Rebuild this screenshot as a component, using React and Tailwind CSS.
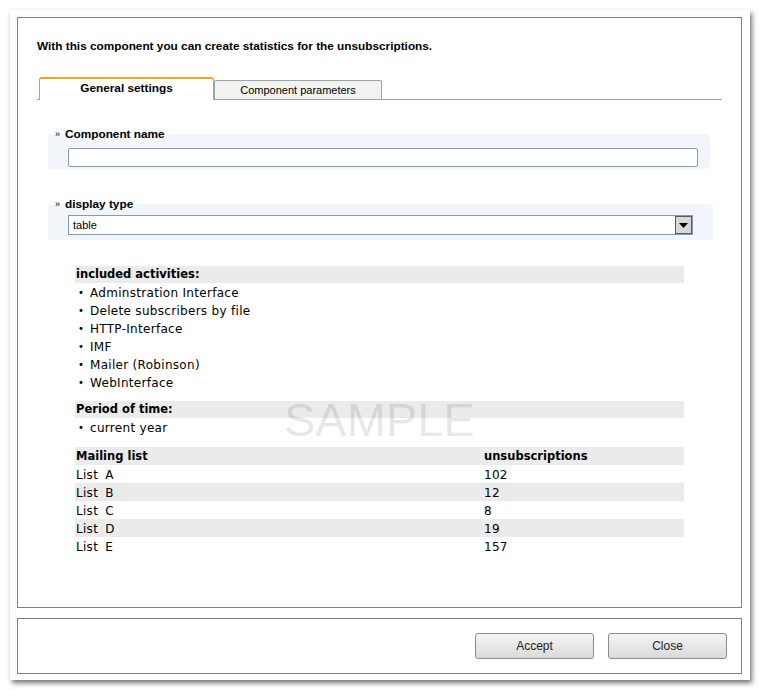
import React from 'react'

const activities = [
  'Adminstration Interface',
  'Delete subscribers by file',
  'HTTP-Interface',
  'IMF',
  'Mailer (Robinson)',
  'WebInterface',
]

const lists = [
  ['A', '102'],
  ['B', '12'],
  ['C', '8'],
  ['D', '19'],
  ['E', '157'],
]

function SectionLabel({ children }) {
  return (
    <div className="relative z-10 ml-[37px] h-[12px] flex items-center gap-[5px] text-[11.8px] leading-[12px] font-bold text-black">
      <span className="text-[9px] font-normal">»</span>
      <span>{children}</span>
    </div>
  )
}

function Bullet({ children }) {
  return (
    <div className="h-[18px] flex items-center pl-[3px] pt-px text-[12px] tracking-[0.3px]">
      <span className="w-[12px] text-[10px]">•</span>
      <span>{children}</span>
    </div>
  )
}

export default function App() {
  return (
    <div className="w-[760px] h-[691px] bg-white relative font-['Liberation_Sans',sans-serif]">
      <div className="absolute left-[10px] top-[10px] w-[740px] h-[670px] bg-white shadow-[2px_3px_5px_rgba(0,0,0,0.55)] pl-[7px] pr-[8px] pt-[7px] flex flex-col">
        {/* main settings panel */}
        <div className="relative h-[591px] border border-[#808080] flex flex-col">
          <div className="ml-[19px] mt-[21px] h-[14px] text-[11.8px] leading-[14px] font-bold text-black">
            With this component you can create statistics for the unsubscriptions.
          </div>

          {/* tabs */}
          <div className="ml-[19px] mt-[24px] w-[685px] h-[23px] flex items-end border-b border-[#91a7b4]">
            <div className="ml-[2px] -mb-px w-[175px] h-[23px] bg-white border-x border-[#91a7b4] border-t-2 border-t-[#eea71e] rounded-t-[3px] flex justify-center pt-[2px] text-[11.8px] leading-[14px] font-bold">
              General settings
            </div>
            <div className="w-[168px] h-[19px] bg-[#f2f2ee] border border-b-0 border-[#91a7b4] rounded-t-[2px] flex items-center justify-center text-[11px] leading-[14px]">
              Component parameters
            </div>
          </div>

          <div className="mt-[28px]">
            <SectionLabel>Component name</SectionLabel>
            <div className="ml-[30px] -mt-[6px] w-[662px] h-[35px] bg-[#f2f6fa] rounded-[4px] pl-[20px] pt-[11px]">
              <input className="w-[630px] h-[19px] bg-white border border-[#7f9db9] rounded-[2px] outline-none" />
            </div>
          </div>

          <div className="mt-[29px]">
            <SectionLabel>display type</SectionLabel>
            <div className="ml-[30px] -mt-[6px] w-[665px] h-[36px] bg-[#f2f6fa] rounded-[4px] pl-[20px] pt-[11px]">
              <div className="w-[625px] h-[20px] bg-white border border-[#7f9db9] flex items-center">
                <span className="flex-1 pl-[4px] text-[11px]">table</span>
                <div className="w-[17px] h-[18px] border border-[#5a5a5a] bg-[#d8d8d8] flex items-center justify-center">
                  <svg width="9" height="5" viewBox="0 0 9 5">
                    <path d="M0 0H9L4.5 5Z" fill="#000" />
                  </svg>
                </div>
              </div>
            </div>
          </div>

          {/* statistics preview */}
          <div className="ml-[57px] mt-[26px] w-[609px] text-black font-['DejaVu_Sans',sans-serif]">
            <div className="h-[17px] bg-[#ebebeb] flex items-center pl-[1px] pt-px text-[11.5px] font-bold">included activities:</div>
            {activities.map((a) => (
              <Bullet key={a}>{a}</Bullet>
            ))}
            <div className="mt-[10px] h-[17px] bg-[#ebebeb] flex items-center pl-[1px] pt-px text-[11.5px] font-bold">Period of time:</div>
            <Bullet>current year</Bullet>
            <div className="mt-[11px] h-[18px] bg-[#ebebeb] flex items-center pl-[1px] pt-px text-[11.5px] font-bold">
              <span className="w-[408px]">Mailing list</span>
              <span>unsubscriptions</span>
            </div>
            {lists.map(([letter, count], i) => (
              <div key={letter} className={`h-[18px] flex items-center pl-[1px] pt-px text-[12px] tracking-[0.3px] ${i % 2 ? 'bg-[#ebebeb]' : 'bg-white'}`}>
                <span className="w-[408px]">
                  List<span className="ml-[7px]">{letter}</span>
                </span>
                <span>{count}</span>
              </div>
            ))}
          </div>

          <div className="absolute left-[266px] top-[377px] text-[47px] leading-[50px] text-black/10 pointer-events-none">
            SAMPLE
          </div>
        </div>

        {/* footer */}
        <div className="mt-[10px] h-[56px] border border-[#808080] flex justify-end items-start gap-[14px] pt-[14px] pr-[14px]">
          <button className="w-[119px] h-[26px] rounded-[3px] border border-[#8c8c8c] bg-gradient-to-b from-[#f5f5f5] to-[#dadada] text-[12px] text-[#222]">
            Accept
          </button>
          <button className="w-[119px] h-[26px] rounded-[3px] border border-[#8c8c8c] bg-gradient-to-b from-[#f5f5f5] to-[#dadada] text-[12px] text-[#222]">
            Close
          </button>
        </div>
      </div>
    </div>
  )
}
